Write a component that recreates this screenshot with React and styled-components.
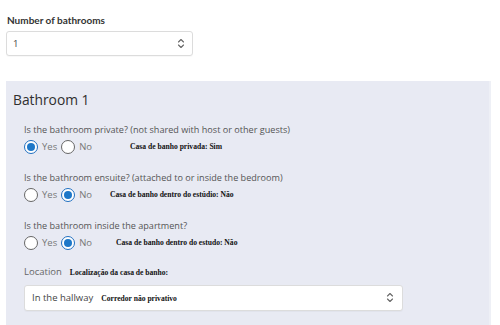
import React from "react";
import styled, { createGlobalStyle } from "styled-components";

const Global = createGlobalStyle`
  html, body { margin: 0; padding: 0; background: #fff; }
  body { font-family: "Open Sans", "Noto Sans", sans-serif; width: 500px; height: 325px; overflow: hidden; }
`;

const Page = styled.div`
  padding: 13px 0 0 6px;
`;

const FieldLabel = styled.div`
  font-family: "Lato", "Noto Sans", sans-serif;
  font-weight: 700;
  font-size: 10px;
  line-height: 14px;
  color: #333;
  padding-left: 1px;
`;

const SelectBox = styled.div`
  box-sizing: border-box;
  width: ${(p) => p.$w}px;
  height: ${(p) => p.$h}px;
  margin-top: ${(p) => p.$mt || 0}px;
  background: #fff;
  border: 1px solid #dcdcdc;
  border-radius: 3px;
  display: flex;
  align-items: center;
  padding: 0 ${(p) => p.$pr}px 0 ${(p) => p.$pl}px;
  font-size: ${(p) => p.$fs}px;
  color: #444;
  box-shadow: 0 1px 1px rgba(0,0,0,0.03);
`;

const Grow = styled.div`
  flex: 1;
  display: flex;
  align-items: baseline;
  gap: 8px;
`;

const Panel = styled.div`
  margin-top: 25px;
  width: 485px;
  height: 260px;
  background: #e8eaf3;
  border-right: 2px solid #eef0f6;
  box-sizing: border-box;
  padding: 9px 0 0 7px;
`;

const Title = styled.div`
  font-size: 13.8px;
  font-weight: 500;
  line-height: 20px;
  color: #2f2f2f;
`;

const Body = styled.div`
  padding-left: 11px;
  margin-top: 13px;
`;

const Group = styled.div`
  margin-bottom: ${(p) => p.$mb}px;
`;

const Question = styled.div`
  font-size: 9.1px;
  line-height: 14px;
  color: #555;
  margin-top: -0.5px;
`;

const RadioRow = styled.div`
  display: flex;
  align-items: center;
  height: 16px;
  margin-top: 2px;
`;

const Option = styled.label`
  display: flex;
  align-items: center;
  gap: 4px;
  margin-right: ${(p) => p.$mr}px;
  font-size: 9.5px;
  color: #777;
`;

const Circle = styled.span`
  box-sizing: border-box;
  width: 14px;
  height: 14px;
  border-radius: 50%;
  background: #fff;
  border: ${(p) => (p.$on ? "1.5px solid #1f6fc0" : "1.2px solid #666")};
  display: flex;
  align-items: center;
  justify-content: center;
  &::after {
    content: "";
    display: ${(p) => (p.$on ? "block" : "none")};
    width: 8px;
    height: 8px;
    border-radius: 50%;
    background: #1e78c8;
  }
`;

const Note = styled.span`
  font-family: "Liberation Serif", "Times New Roman", serif;
  font-weight: 700;
  font-size: 7.6px;
  color: #111;
  margin-left: ${(p) => p.$ml || 0}px;
`;

const LocLabel = styled.div`
  display: flex;
  align-items: baseline;
  font-size: 9.5px;
  line-height: 14px;
  color: #666;
  gap: 8px;
`;

const Chevron = () => (
  <svg width="8" height="11" viewBox="0 0 8 11" fill="none" stroke="#666" strokeWidth="1.1" strokeLinecap="round" strokeLinejoin="round">
    <path d="M1.5 4 L4 1.5 L6.5 4" />
    <path d="M1.5 7 L4 9.5 L6.5 7" />
  </svg>
);

const Radios = ({ yes, note, noteMl }) => (
  <RadioRow>
    <Option $mr={4}><Circle $on={yes} />Yes</Option>
    <Option $mr={0}><Circle $on={!yes} />No</Option>
    <Note $ml={noteMl}>{note}</Note>
  </RadioRow>
);

export default function App() {
  return (
    <>
      <Global />
      <Page>
        <FieldLabel>Number of bathrooms</FieldLabel>
        <SelectBox $w={187} $h={25} $mt={4} $pl={6} $pr={7} $fs={9.5}>
          <Grow>1</Grow>
          <Chevron />
        </SelectBox>
        <Panel>
          <Title>Bathroom 1</Title>
          <Body>
            <Group $mb={16.5}>
              <Question>Is the bathroom private? (not shared with host or other guests)</Question>
              <Radios yes={true} note="Casa de banho privada: Sim" noteMl={38} />
            </Group>
            <Group $mb={16.5}>
              <Question>Is the bathroom ensuite? (attached to or inside the bedroom)</Question>
              <Radios yes={false} note="Casa de banho dentro do estúdio: Não" noteMl={18} />
            </Group>
            <Group $mb={14}>
              <Question>Is the bathroom inside the apartment?</Question>
              <Radios yes={false} note="Casa de banho dentro do estudo: Não" noteMl={24} />
            </Group>
            <LocLabel>
              Location
              <Note>Localização da casa de banho:</Note>
            </LocLabel>
            <SelectBox $w={379} $h={26} $mt={5} $pl={7} $pr={8} $fs={9.5}>
              <Grow>
                In the hallway
                <Note>Corredor não privativo</Note>
              </Grow>
              <Chevron />
            </SelectBox>
          </Body>
        </Panel>
      </Page>
    </>
  );
}
